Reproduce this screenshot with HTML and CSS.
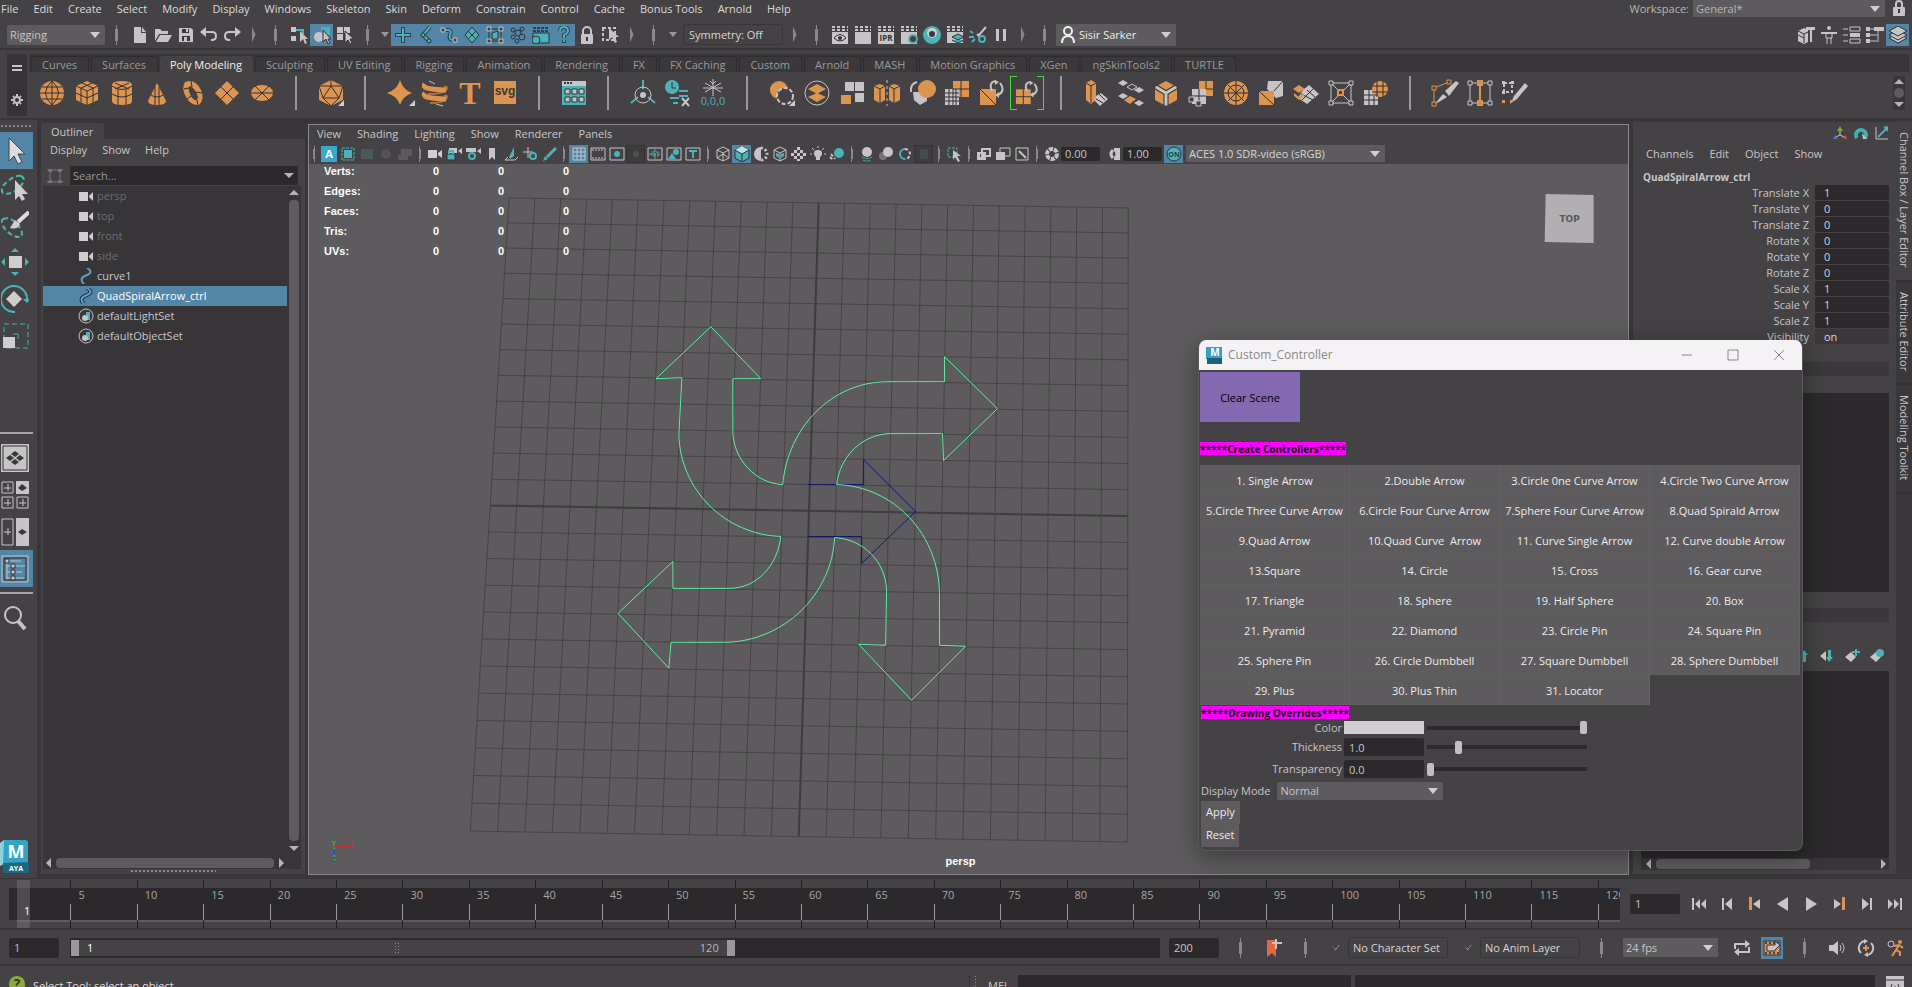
FILE: index.html
```html
<!DOCTYPE html>
<html lang="en">
<head>
    <meta charset="UTF-8">
    <meta name="viewport" content="width=device-width, initial-scale=1.0">
    <title>Custom_Controller</title>
    <link rel="stylesheet" href="styles.css">
</head>
<body>

<header class="menubar">
    <nav class="menu">
        <a href="#">File</a><a href="#">Edit</a><a href="#">Create</a><a href="#">Select</a><a href="#">Modify</a><a href="#">Display</a><a href="#">Windows</a><a href="#">Skeleton</a><a href="#">Skin</a><a href="#">Deform</a><a href="#">Constrain</a><a href="#">Control</a><a href="#">Cache</a><a href="#">Bonus Tools</a><a href="#">Arnold</a><a href="#">Help</a>
    </nav>
    <div class="workspace">
        <label for="workspace">Workspace:</label>
        <div class="select"><select id="workspace"><option>General*</option></select></div>
        <svg class="lock" width="14" height="16" viewBox="0 0 14 16"><path d="M4 8V4a3 3 0 0 1 6 0v4" fill="none" stroke="#c6c4c6" stroke-width="2"/><rect class="g" x="1" y="7" width="12" height="9" rx="1"/><path class="d" d="M6 9h2v4H6z"/></svg>
    </div>
</header>

<!-- Status line -->
<div class="status-line">
    <div class="select menuset"><select aria-label="Menu set"><option>Rigging</option></select></div>
    <i class="sep"></i>
    <button class="tool" aria-label="New scene"><svg width="18" height="18" viewBox="0 0 18 18"><path class="g" d="M3 1h7v6h5v10H3z"/><path class="g" d="M11 1l4 5h-4z"/></svg></button>
    <button class="tool" aria-label="Open scene"><svg width="18" height="18" viewBox="0 0 18 18"><path class="g" d="M1 3h5l2 2h6v3H5l-4 7z"/><path class="g" d="M6 9h12l-4 7H2z"/></svg></button>
    <button class="tool" aria-label="Save scene"><svg width="18" height="18" viewBox="0 0 18 18"><path class="g" d="M2 2h12l2 2v12H2z"/><path class="d" d="M5 3h7v4H5zM5 10h8v5H5z"/><path class="g" d="M9 3h2v3H9zM7 11h3v4H7z"/></svg></button>
    <button class="tool" aria-label="Undo"><svg width="18" height="18" viewBox="0 0 18 18"><path class="ln2" d="M3 6h9q4 0 4 4t-4 4h-1"/><path class="g" d="M6 1v10L0 6z"/></svg></button>
    <button class="tool" aria-label="Redo"><svg width="18" height="18" viewBox="0 0 18 18"><path class="ln2" d="M15 6H6q-4 0-4 4t4 4h1"/><path class="g" d="M12 1v10l6-5z"/></svg></button>
    <i class="chev"></i><i class="sep"></i>
    <button class="tool" aria-label="Select by hierarchy"><svg width="18" height="18" viewBox="0 0 18 18"><path class="g" d="M1 1h5v5H1zM1 10h5v5H1z"/><path class="lt" d="M6 4h7v4"/><path class="g" d="M10 5v11l3-3 2 5 2-1-2-4h3z"/></svg></button>
    <button class="tool on" aria-label="Select by object"><svg width="18" height="18" viewBox="0 0 18 18"><path class="t" d="M8 1h9v8H8z"/><circle class="g" cx="6" cy="11" r="5"/><path class="g st" d="M10 4v12l3-3 2 5 2-1-2-4h3z"/></svg></button>
    <button class="tool" aria-label="Select by component"><svg width="18" height="18" viewBox="0 0 18 18"><path class="g" d="M1 1h6v6H1zM8 1h6v6H8zM1 8h6v6H1z"/><path class="g st" d="M9 5v12l3-3 2 4 2-1-2-4h4z"/></svg></button>
    <i class="sep"></i><i class="drop"></i>
    <button class="tool on" aria-label="Handles"><svg width="18" height="18" viewBox="0 0 18 18"><path class="ld3" d="M9 1v16M1 9h16"/><path class="lt" d="M9 2v14M2 9h14"/></svg></button>
    <button class="tool on" aria-label="Joints"><svg width="18" height="18" viewBox="0 0 18 18"><path class="ld3" d="M13 1L6 9l6 6"/><path class="lt" d="M13 1L6 9l6 6"/><circle class="t st" cx="6" cy="9" r="2"/><circle class="t st" cx="12" cy="15" r="2"/></svg></button>
    <button class="tool on" aria-label="Curves"><svg width="18" height="18" viewBox="0 0 18 18"><path class="ld3" d="M4 4h4q4 0 2 5t4 5"/><path class="lt" d="M4 4h4q4 0 2 5t4 5"/><path class="hb" d="M1 2h4v4H1zM13 12h4v4h-4z"/></svg></button>
    <button class="tool on" aria-label="Surfaces"><svg width="18" height="18" viewBox="0 0 18 18"><path class="t st" d="M9 1l7 8-7 8-7-8z"/><path class="ld" d="M5 5l8 8M13 5l-8 8"/></svg></button>
    <button class="tool on" aria-label="Deformations"><svg width="18" height="18" viewBox="0 0 18 18"><path class="ld" d="M3 3h12v12H3z"/><path class="t st" d="M6 7l6-2v8H6z"/><path class="hb" d="M1 1h4v4H1zM13 1h4v4h-4zM1 13h4v4H1zM13 13h4v4h-4z"/></svg></button>
    <button class="tool on" aria-label="Dynamics"><svg width="18" height="18" viewBox="0 0 18 18"><g class="ld"><circle cx="4" cy="4" r="2"/><circle cx="13" cy="3" r="2"/><circle cx="9" cy="7" r="3"/><circle cx="4" cy="11" r="2"/><circle cx="13" cy="11" r="3"/><circle cx="8" cy="15" r="2"/></g></svg></button>
    <button class="tool on" aria-label="Rendering"><svg width="18" height="18" viewBox="0 0 18 18"><path class="t st" d="M1 7h16v10H1z"/><path class="dash" d="M1 2h16M1 5h16"/><circle class="t st" cx="4" cy="14" r="4"/></svg></button>
    <button class="tool on" aria-label="Miscellaneous"><svg width="18" height="18" viewBox="0 0 18 18"><path class="ld3" d="M5 5q0-4 4-4t4 4q0 2-4 4v3M9 14v3"/><path class="lt" d="M5 5q0-4 4-4t4 4q0 2-4 4v3M9 14v2"/></svg></button>
    <button class="tool" aria-label="Lock selection"><svg width="18" height="18" viewBox="0 0 18 18"><path class="ln2" d="M5 8V5a4 4 0 0 1 8 0v3"/><rect class="g" x="3" y="8" width="12" height="10" rx="1"/><path class="d" d="M8 11h2v4H8z"/></svg></button>
    <button class="tool" aria-label="Highlight selection"><svg width="18" height="18" viewBox="0 0 18 18"><path class="dashg" d="M2 2h12v12H2z"/><path class="g" d="M8 2v12l3-3 3 6 2-1-2-5h4z"/></svg></button>
    <i class="chev"></i><i class="sep"></i><i class="drop wide"></i>
    <button class="boxed symmetry">Symmetry: Off</button>
    <i class="chev"></i><i class="sep"></i>
    <button class="tool" aria-label="Render view"><svg width="18" height="18" viewBox="0 0 18 18"><path class="dashg" d="M1 1h16M1 4h16"/><path class="g" d="M1 6h16v12H1z"/><path class="ld" d="M3 12q6-7 12 0q-6 6-12 0"/><circle class="d" cx="9" cy="12" r="2"/></svg></button>
    <button class="tool" aria-label="Render frame"><svg width="18" height="18" viewBox="0 0 18 18"><path class="dashg" d="M1 1h16M1 4h16"/><path class="g" d="M1 6h16v12H1z"/></svg></button>
    <button class="tool" aria-label="IPR render"><svg width="18" height="18" viewBox="0 0 18 18"><path class="dashg" d="M1 1h16M1 4h16"/><path class="g" d="M1 6h16v12H1z"/><text class="tiny" x="9" y="15" text-anchor="middle">IPR</text></svg></button>
    <button class="tool" aria-label="Render settings"><svg width="18" height="18" viewBox="0 0 18 18"><path class="dashg" d="M1 1h16M1 4h16"/><path class="g" d="M1 6h16v12H1z"/><circle cx="13" cy="13" r="4" class="gear"/></svg></button>
    <button class="tool" aria-label="Hypershade"><svg width="18" height="18" viewBox="0 0 18 18"><circle class="t" cx="9" cy="9" r="9"/><circle class="w" cx="9" cy="7" r="5"/><circle class="d" cx="9" cy="8" r="3"/></svg></button>
    <button class="tool" aria-label="Render setup"><svg width="18" height="18" viewBox="0 0 18 18"><path class="dashg" d="M1 1h16M1 4h16"/><path class="g" d="M1 6h16v11H1z"/><path class="t st" d="M12 8l6 3-6 3-6-3zM6 14l6 3 6-3"/></svg></button>
    <button class="tool" aria-label="Light editor"><svg width="18" height="18" viewBox="0 0 18 18"><path class="ln2" d="M17 1l-7 8M8 8l3 3"/><path class="lt" d="M1 5l3 2M0 11h5M3 16l3-3"/><circle cx="13" cy="13" r="3" class="gear"/></svg></button>
    <button class="tool" aria-label="Pause"><svg width="18" height="18" viewBox="0 0 18 18"><path class="g" d="M4 3h3v12H4zM11 3h3v12h-3z"/></svg></button>
    <i class="chev"></i><i class="sep"></i>
    <div class="select account">
        <svg width="16" height="18" viewBox="0 0 16 18"><circle cx="8" cy="5" r="4" fill="none" stroke="#eee" stroke-width="2"/><path d="M2 17q0-7 6-7t6 7" fill="none" stroke="#eee" stroke-width="2"/></svg>
        <select aria-label="Account"><option>Sisir Sarker</option></select>
    </div>
    <div class="sidebar-toggles">
        <button class="tool" aria-label="Modeling toolkit"><svg width="18" height="18" viewBox="0 0 18 18"><path class="g" d="M1 5l6-3 4 2v12l-4 2-6-3z"/><path class="ld" d="M1 9l6 3M7 8v9M1 5l6 3 4-2"/><path class="g" d="M9 1h9v3h-3v12h-2V4H9z"/></svg></button>
        <button class="tool" aria-label="Human IK"><svg width="18" height="18" viewBox="0 0 18 18"><circle class="g" cx="9" cy="2" r="2"/><path class="ln2" d="M1 7h16"/><path class="ln" d="M6 6v6h6V6M7 12v6M11 12v6"/></svg></button>
        <button class="tool" aria-label="Attribute editor"><svg width="18" height="18" viewBox="0 0 18 18"><path class="ln" d="M0 3h5M7 1h10v4H7zM0 9h5M0 15h5M7 13h10v4H7z"/><path class="g" d="M7 7h10v4H7z"/></svg></button>
        <button class="tool" aria-label="Tool settings"><svg width="18" height="18" viewBox="0 0 18 18"><path class="ln" d="M3 3h5M3 9h8M3 15h8M12 4v12"/><path class="g" d="M0 1h4v4H0zM0 7h4v4H0zM0 13h4v4H0zM8 1h10v4H8z"/></svg></button>
        <button class="tool on" aria-label="Channel box"><svg width="18" height="18" viewBox="0 0 18 18"><path class="g st" d="M9 7l9 5-9 5-9-5z"/><path class="g st" d="M9 4l9 5-9 5-9-5z"/><path class="g st" d="M9 0l9 5-9 5-9-5z"/></svg></button>
    </div>
</div>

<!-- Shelf -->
<div class="shelf">
    <div class="shelf-side">
        <svg width="12" height="8" viewBox="0 0 12 8"><path class="g" d="M1 1h10v2H1zM1 5h10v2H1z"/></svg>
        <svg width="12" height="12" viewBox="0 0 12 12"><circle cx="6" cy="6" r="3" fill="none" stroke="#c6c4c6" stroke-width="2"/><path d="M6 0v2M6 10v2M0 6h2M10 6h2M2 2l1 1M9 9l1 1M10 2L9 3M2 10l1-1" stroke="#c6c4c6" stroke-width="2"/></svg>
    </div>
    <div class="shelf-main">
        <div class="shelf-tabs">
            <button>Curves</button><button>Surfaces</button><button class="active">Poly Modeling</button><button>Sculpting</button><button>UV Editing</button><button>Rigging</button><button>Animation</button><button>Rendering</button><button>FX</button><button>FX Caching</button><button>Custom</button><button>Arnold</button><button>MASH</button><button>Motion Graphics</button><button>XGen</button><button>ngSkinTools2</button><button>TURTLE</button>
        </div>
        <div class="shelf-icons">
            <button aria-label="Sphere"><svg viewBox="0 0 26 26"><circle class="o" cx="13" cy="13" r="12"/><path class="ld" d="M1 13h24M3 7h20M3 19h20M13 1v24M13 1q-13 12 0 24M13 1q13 12 0 24"/></svg></button>
            <button aria-label="Cube"><svg viewBox="0 0 26 26"><path class="o" d="M13 1l11 5v14l-11 5-11-5V6z"/><path class="ld" d="M2 6l11 5 11-5M13 11v14M8 3l11 5v14M18 3L7 8v14M2 13l11 5 11-5"/></svg></button>
            <button aria-label="Cylinder"><svg viewBox="0 0 26 26"><path class="o" d="M3 5q0-4 10-4t10 4v16q0 4-10 4T3 21z"/><path class="ld" d="M3 6q10 7 20 0M3 14q10 6 20 0M9 9v16M17 9v16M6 3l14 6M20 3L6 9"/></svg></button>
            <button aria-label="Cone"><svg viewBox="0 0 26 26"><path class="o" d="M13 3l9 18q0 4-9 4t-9-4z"/><path class="ld" d="M7 15q6 4 12 0M11 7v18M15 7v18"/></svg></button>
            <button aria-label="Torus"><svg viewBox="0 0 26 26"><path class="o" fill-rule="evenodd" d="M10 1q8 0 12 9t-2 15q-8 1-13-8T6 2zm1 5q-3 1 0 8t7 6q2-3-1-8t-6-6z"/><path class="ld" d="M5 9l5-1M12 1l1 6M16 12l7 1M8 19l4-3M18 20l1 5"/></svg></button>
            <button aria-label="Plane"><svg viewBox="0 0 26 26"><path class="o" d="M13 1l12 12-12 12L1 13z"/><path class="ld" d="M7 7l12 12M19 7L7 19"/></svg></button>
            <button aria-label="Disc"><svg viewBox="0 0 26 26"><ellipse class="o" cx="13" cy="13" rx="11" ry="8"/><path class="ld" d="M2 13h22M6 6l14 14M20 6L6 20"/></svg></button>
            <i class="bar"></i>
            <button aria-label="Platonic solid"><svg viewBox="0 0 26 26"><path class="o" d="M13 0l12 6v14l-12 6-12-6V6z"/><path class="ld" d="M13 0v6L5 18h16L13 6M1 6l12 0 12 0M5 18l-4-12M21 18l4-12M5 18l8 8 8-8"/><path class="w" d="M26 20v6h-6z"/></svg></button>
            <i class="bar"></i>
            <button aria-label="Super shape"><svg viewBox="0 0 26 26"><path class="o" d="M13 0q3 10 12 13-9 3-12 12Q10 16 0 13 10 10 13 0z"/><path class="w" d="M28 20v6h-6z"/></svg></button>
            <button aria-label="Helix"><svg viewBox="0 0 26 26"><path d="M22 7q5-1 2 3t-18 4M22 16q5-1 2 3t-16 4" fill="none" stroke="#b87437" stroke-width="2"/><path d="M3 4q-3 4 7 5t14 1M3 13q-3 4 7 5t14 1" fill="none" stroke="#dd9450" stroke-width="5"/><path class="ln" d="M7 1l6 3M14 24l7 2"/></svg></button>
            <button aria-label="Type"><svg viewBox="0 0 26 26"><text class="type-t" x="13" y="24" text-anchor="middle">T</text></svg></button>
            <button aria-label="SVG"><svg viewBox="0 0 26 26"><path class="o" d="M2 1h22v23H2z"/><text class="svg-t" x="13" y="15" text-anchor="middle">svg</text></svg></button>
            <i class="bar"></i>
            <button aria-label="Content browser"><svg viewBox="0 0 26 26"><path class="g" d="M1 1h24v5H1z"/><path class="d" d="M3 2h2v2H3zM6 2h2v2H6zM9 2h2v2H9z"/><path class="t" d="M1 6h24v19H1z"/><path d="M4 9h5v5H4zM11 9h5v5h-5zM18 9h5v5h-5zM4 17h5v5H4zM11 17h5v5h-5zM18 17h5v5h-5z" fill="#c6c4c6" stroke="#333"/></svg></button>
            <i class="bar"></i>
            <button aria-label="Center pivot"><svg viewBox="0 0 26 26"><path class="lt2" d="M13 0v9M8 17l-7 6M18 17l7 6"/><circle class="ln" cx="13" cy="15" r="8"/><circle class="g" cx="13" cy="15" r="3"/></svg></button>
            <button aria-label="Delete history"><svg viewBox="0 0 26 26"><circle class="t" cx="7" cy="7" r="7"/><path class="ld" d="M7 2v6h4"/><path class="lt2" d="M14 11h9M5 18h9M14 16h9M8 23h5"/><path class="ln2" d="M17 18l7 8M24 18l-7 8"/></svg></button>
            <button aria-label="Freeze transformations"><svg viewBox="0 0 26 26"><path class="ln" d="M13 -1v17M5 3l16 9M21 3L5 12M3 8h20M10 1l3 3 3-3"/><text class="zeros" x="13" y="25" text-anchor="middle">0,0,0</text></svg></button>
            <i class="bar"></i>
            <button aria-label="Booleans"><svg viewBox="0 0 26 26"><circle class="o" cx="10" cy="10" r="9"/><circle cx="16" cy="16" r="8" fill="#444244" stroke="#c6c4c6" stroke-width="2" stroke-dasharray="4 2"/><path class="w" d="M26 20v6h-6z"/></svg></button>
            <button aria-label="Combine"><svg viewBox="0 0 26 26"><circle class="ln" cx="13" cy="13" r="12"/><path class="o" d="M13 4l9 5-9 5-9-5zM13 13l9 4-9 5-9-5z"/></svg></button>
            <button aria-label="Separate"><svg viewBox="0 0 26 26"><path class="g" d="M6 2h9v9H6zM16 2h9v9h-9zM16 13h9v9h-9z"/><path class="o" d="M2 15h10v9H2z"/></svg></button>
            <button aria-label="Mirror"><svg viewBox="0 0 26 26"><path class="o" d="M0 6l6-2 5 2v14l-5 3-6-3zM15 6l5-2 6 2v14l-6 3-5-3z"/><path class="ld" d="M0 6l6 3 5-3M6 9v14M15 6l5 3 6-3M20 9v14"/><path d="M13 0v26" stroke="#c6c4c6" stroke-dasharray="3 3"/></svg></button>
            <button aria-label="Smooth"><svg viewBox="0 0 26 26"><path class="g" d="M4 12h14v9l-7 4-6-5z"/><circle class="o" cx="18" cy="9" r="9"/><path class="ln2" d="M2 12q-1-8 6-10"/></svg></button>
            <button aria-label="Reduce"><svg viewBox="0 0 26 26"><path class="o" d="M9 1h16v16H9z"/><path class="g" d="M1 9h14v16H1z"/><path class="ld" d="M17 1v16M9 9h16M1 13h14M1 17h14M1 21h14M5 9v16M9 9v16M12 9v16"/></svg></button>
            <button aria-label="Triangulate"><svg viewBox="0 0 26 26"><path class="o" d="M1 9h16v16H1z"/><path class="ld" d="M1 9l16 16"/><path class="ln2" d="M13 11q-4-9 4-10M21 3q6 8-2 12"/><path class="g" d="M16 0l4 2-4 3zM20 12v6l-4-3z"/></svg></button>
            <button aria-label="Quadrangulate"><svg viewBox="0 0 26 26" class="framed"><path class="o" d="M1 9h16v16H1z"/><path class="ld" d="M9 9v16M1 17h16"/><path class="ln2" d="M13 11q-4-9 4-10M21 3q6 8-2 12"/><path class="g" d="M16 0l4 2-4 3zM20 12v6l-4-3z"/></svg></button>
            <i class="bar"></i>
            <button aria-label="Extrude"><svg viewBox="0 0 26 26"><path class="o" d="M3 3l5-3 5 3v17l-5 4-5-4z"/><path class="ld" d="M3 3l5 3 5-3M8 6v17"/><path class="g" d="M13 16l5-3 7 6-8 7-5-5z"/><path class="ld" d="M13 19l7 4M16 14l6 6"/></svg></button>
            <button aria-label="Bridge"><svg viewBox="0 0 26 26"><path class="g" d="M0 3l5-3 5 3-5 3zM16 10l5-3 5 3-5 3zM0 16l5-3 5 3-5 3zM16 23l5-3 5 3-5 3z"/><path class="o" d="M6 20l6-4 6 3-6 5z"/><path class="ln" d="M9 7l5-3 5 3-5 3z"/></svg></button>
            <button aria-label="Bevel"><svg viewBox="0 0 26 26"><path class="o" d="M2 7l11-6 11 6v13l-11 6-11-6z"/><path d="M3 7l10 6 10-6M13 13v12" fill="none" stroke="#333133" stroke-width="5"/><path d="M3 7l10 6 10-6M13 13v12" fill="none" stroke="#c6c4c6" stroke-width="3"/></svg></button>
            <button aria-label="Merge"><svg viewBox="0 0 26 26"><path class="o" d="M11 1h14v15H11z"/><path class="g" d="M4 9h14v15H4z"/><path class="ld" d="M18 1v8h7M4 16h14M11 9v15"/><path class="hb" d="M1 17h5v5H1zM8 21h5v5H8z"/></svg></button>
            <button aria-label="Circularize"><svg viewBox="0 0 26 26"><circle class="o" cx="13" cy="13" r="12"/><circle class="ld" cx="13" cy="13" r="8"/><path class="ld" d="M1 13h24M13 1v24M5 5l16 16M21 5L5 21"/></svg></button>
            <button aria-label="Collapse"><svg viewBox="0 0 26 26"><path class="g" d="M10 1h15v15l-7 2-9-9z"/><path class="o" d="M1 11h15v14H1z"/><path class="ld" d="M1 11l15 14M16 11l9-10"/></svg></button>
            <button aria-label="Connect"><svg viewBox="0 0 26 26"><path class="g" d="M10 10l6-5 10 9-12 10-9-6z"/><path class="ld" d="M8 14l12 6M14 10l8 7M20 9l-11 11"/><path class="o" d="M0 9l6-4 6 4-6 4zM1 13l5 4 5-4v3l-5 4-5-4z"/></svg></button>
            <button aria-label="Target weld"><svg viewBox="0 0 26 26"><path class="ln" d="M3 3h20v20H3zM3 3l7 7M23 3l-7 7M3 23l7-7M23 23l-7-7"/><path class="hb" d="M1 1h4v4H1zM21 1h4v4h-4zM1 21h4v4H1zM21 21h4v4h-4z"/><path d="M10 10h5v5h-5z" fill="#444244" stroke="#dd9450" stroke-width="2"/></svg></button>
            <button aria-label="Wrap"><svg viewBox="0 0 26 26"><path class="g" d="M1 10h14v15H1z"/><circle class="o" cx="17" cy="9" r="8"/><path class="ld" d="M1 15h14M1 20h14M6 10v15M11 16v9M9 6h16M9 12h16M14 1v16M20 1v16"/></svg></button>
            <i class="bar"></i>
            <button aria-label="Multi-cut"><svg viewBox="0 0 26 26"><path d="M2 23V8l15-6" fill="none" stroke="#dd9450"/><path class="g" d="M2 25l9-11 4 3zM13 11L24 1l3 2-10 13z"/><path d="M0 6h4v4H0zM15 0h4v4h-4zM0 22h4v4H0z" fill="#444244" stroke="#dd9450"/></svg></button>
            <button aria-label="Offset edge loop"><svg viewBox="0 0 26 26"><path class="ln" d="M3 3h20M3 23h20M3 3v20M23 3v20"/><path class="lo" d="M13 3v20M11 1h4v4h-4zM11 21h4v4h-4z"/><path class="hb" d="M1 1h4v4H1zM21 1h4v4h-4zM1 21h4v4H1zM21 21h4v4h-4z"/></svg></button>
            <button aria-label="Quad draw"><svg viewBox="0 0 26 26"><path class="dashg" d="M2 3h8v9H2z"/><path class="g" d="M0 1h3v3H0zM9 1h3v3H9zM0 11h3v3H0z"/><path class="g" d="M9 23l3-7L23 3l3 3-11 13z"/><path class="o" d="M0 20h3v3H0zM8 20h4l-4 4z"/></svg></button>
            <div class="shelf-scroll"><i class="up"></i><i class="ball"></i><i class="down"></i></div>
        </div>
    </div>
</div>

<main class="workarea">
    <!-- Tool box -->
    <aside class="toolbox">
        <i class="grip"></i>
        <button class="on" aria-label="Select tool"><svg viewBox="0 0 28 28"><path d="M8 1v23l5-5 4 8 4-2-4-8h7z" fill="#dddbdd" stroke="#444" /></svg></button>
        <button aria-label="Lasso tool"><svg viewBox="0 0 28 28"><path class="tdash" d="M20 2q6 3-1 11-9 9-17 6-4-5 5-12 7-6 13-5"/><path class="w" d="M14 6v20l4-4 3 5 3-2-3-5h6z"/></svg></button>
        <button aria-label="Paint selection tool"><svg viewBox="0 0 28 28"><path class="tdash" d="M2 8q7-3 14 5t4 13q-8 1-15-7T2 8"/><path d="M28 1L17 11" stroke="#dddbdd" stroke-width="4"/><path class="w" d="M14 9l5 4q-2 6-10 4z"/></svg></button>
        <button aria-label="Move tool"><svg viewBox="0 0 28 28"><path class="w" d="M8 8h13v12H8z"/><path class="t" d="M14 0l4 4h-8zM14 28l4-4h-8zM0 14l4-4v8zM28 14l-4-4v8z"/></svg></button>
        <button aria-label="Rotate tool"><svg viewBox="0 0 28 28"><path class="lt2" d="M14 27A13 13 0 1 1 26 14"/><path class="t" d="M22 14h8l-4 4z"/><path class="w" d="M13 6l8 8-8 8-8-8z"/></svg></button>
        <button aria-label="Scale tool"><svg viewBox="0 0 28 28"><path d="M3 2h24v24H3z" fill="none" stroke="#4db5b0" stroke-dasharray="5 3"/><path class="w" d="M2 15h12v11H2z"/><path d="M12 12h5v5" fill="none" stroke="#4db5b0"/></svg></button>
        <hr class="far">
        <button aria-label="Single view"><svg viewBox="0 0 28 28"><path class="g" d="M0 0h28v28H0z"/><path class="ld" d="M2 2h24v24H2z"/><path class="d" d="M14 7l4 3-4 3-4-3zM14 15l4 3-4 3-4-3zM9 11l4 3-4 3-4-3zM19 11l4 3-4 3-4-3z"/></svg></button>
        <button aria-label="Four views"><svg viewBox="0 0 28 28"><path class="ln" d="M1 1h11v11H1zM1 16h11v11H1zM16 16h11v11H16zM3 7h7M7 3v7M3 22h7M7 18v7M18 22h7M22 18v7"/><path class="g" d="M15 0h13v13H15z"/><path class="d" d="M21 3l5 4-5 3-4-3z"/></svg></button>
        <button aria-label="Two panes"><svg viewBox="0 0 28 28"><path class="ln" d="M1 1h11v26H1zM3 14h7M7 10v7"/><path class="g" d="M15 0h13v28H15z"/><path class="d" d="M21 11l5 3-5 3-4-3z"/></svg></button>
        <button class="on" aria-label="Outliner"><svg viewBox="0 0 28 28"><path class="ln" d="M1 1h26v26H1z"/><path class="ld" d="M3 3h22v22H3z"/><path class="ln" d="M6 6v18M7 6h13M12 11h12M12 17h9M12 23h11M6 11h4M6 17h4M6 23h4"/><path class="g st" d="M4 4h4v4H4zM10 9h4v4h-4zM10 15h4v4h-4zM10 21h4v4h-4z"/></svg></button>
        <hr>
        <button aria-label="Search"><svg viewBox="0 0 28 28"><circle cx="12" cy="11" r="8" fill="none" stroke="#c6c4c6" stroke-width="2"/><path d="M17 17l7 8" stroke="#c6c4c6" stroke-width="4"/></svg></button>
        <svg class="maya" width="30" height="33" viewBox="0 0 30 33"><path d="M0 3l4-3v24l-4 2z" fill="#8fd0e0"/><path d="M4 0h22l2 2v22H3z" fill="#34a3c8"/><path d="M3 23l26-1v11H3z" fill="#1c6680"/><text x="16" y="18" text-anchor="middle" class="maya-m">M</text><text x="16" y="31" text-anchor="middle" class="maya-s">AYA</text></svg>
    </aside>

    <!-- Outliner -->
    <section class="outliner">
        <div class="panel-tab"><span>Outliner</span></div>
        <nav class="menu"><a href="#">Display</a><a href="#">Show</a><a href="#">Help</a></nav>
        <div class="search">
            <svg width="16" height="18" viewBox="0 0 16 18"><path d="M3 3h10v12H3z" fill="none" stroke="#777577"/><path d="M0 2h5v3H2zM11 2h5l-2 3h-3zM0 14l5-1v3H1zM11 13l5 1-1 2h-4z" fill="#777577"/></svg>
            <div class="search-box"><input type="text" placeholder="Search..." aria-label="Search outliner"><i class="down"></i></div>
        </div>
        <div class="tree-wrap">
            <ul class="tree">
                <li class="dim"><svg viewBox="0 0 16 16"><path class="w" d="M1 4h9v9H1zM15 4v9l-4-4V8z"/></svg>persp</li>
                <li class="dim"><svg viewBox="0 0 16 16"><path class="w" d="M1 4h9v9H1zM15 4v9l-4-4V8z"/></svg>top</li>
                <li class="dim"><svg viewBox="0 0 16 16"><path class="w" d="M1 4h9v9H1zM15 4v9l-4-4V8z"/></svg>front</li>
                <li class="dim"><svg viewBox="0 0 16 16"><path class="w" d="M1 4h9v9H1zM15 4v9l-4-4V8z"/></svg>side</li>
                <li><svg viewBox="0 0 16 16"><path d="M9 0q7 4 0 7-9 3-3 9" fill="none" stroke="#5b9fca" stroke-width="2"/></svg>curve1</li>
                <li class="selected"><svg viewBox="0 0 16 16"><path d="M9 0q7 4 0 7-9 3-3 9" fill="none" stroke="#23333f" stroke-width="4"/><path d="M9 0q7 4 0 7-9 3-3 9" fill="none" stroke="#5b9fca" stroke-width="2"/></svg>QuadSpiralArrow_ctrl</li>
                <li><svg viewBox="0 0 16 16"><circle class="ln" cx="8" cy="8" r="7"/><path class="t" d="M8 4h4v8H8z"/><circle class="g" cx="7" cy="10" r="3"/></svg>defaultLightSet</li>
                <li><svg viewBox="0 0 16 16"><circle class="ln" cx="8" cy="8" r="7"/><path class="t" d="M8 4h4v8H8z"/><circle class="g" cx="7" cy="10" r="3"/></svg>defaultObjectSet</li>
            </ul>
            <div class="vscroll"><i class="up"></i><b></b><i class="down"></i></div>
        </div>
        <div class="hscroll"><i class="left"></i><b></b><i class="right"></i></div>
        <div class="dots"></div>
    </section>

    <!-- Viewport -->
    <section class="viewport">
        <nav class="menu"><a href="#">View</a><a href="#">Shading</a><a href="#">Lighting</a><a href="#">Show</a><a href="#">Renderer</a><a href="#">Panels</a></nav>
        <div class="panel-bar">
            <i class="sep"></i>
            <button aria-label="Arnold"><svg viewBox="0 0 16 16"><path d="M0 0h16v16H0z" fill="#3aa7cc"/><text class="a-t" x="8" y="12" text-anchor="middle">A</text></svg></button>
            <button aria-label="Region"><svg viewBox="0 0 16 16"><path class="t" d="M4 4h8v8H4z"/><path class="tdash2" d="M2 2h12v12H2z"/></svg></button>
            <button class="off" aria-label="Snapshot"><svg viewBox="0 0 16 16"><path d="M2 3h12v10H2z" fill="#4a595b"/></svg></button>
            <button class="off" aria-label="Channels"><svg viewBox="0 0 16 16"><circle cx="8" cy="8" r="5" fill="#555355"/></svg></button>
            <button class="off" aria-label="Layers"><svg viewBox="0 0 16 16"><path d="M4 3h11v7H4zM1 9h10v5H1z" fill="#5c5a5c"/></svg></button>
            <i class="sep"></i>
            <button aria-label="Select camera"><svg viewBox="0 0 16 16"><path class="w" d="M1 4h9v8H1zM15 4v8l-4-3V7z"/></svg></button>
            <button aria-label="Lock camera"><svg viewBox="0 0 16 16"><path class="g" d="M3 2h8v5H3zM16 2v6l-4-3z"/><path class="t st" d="M1 8h8v6H1z"/><path class="lt" d="M3 8V5h4v3"/></svg></button>
            <button aria-label="Camera attributes"><svg viewBox="0 0 16 16"><path class="g" d="M1 2h10v4H1zM16 2v6l-4-3z"/><circle cx="7" cy="10" r="3" class="gear"/></svg></button>
            <button aria-label="Bookmarks"><svg viewBox="0 0 16 16"><path class="g" d="M5 2h6v12l-3-3-3 3z"/></svg></button>
            <button aria-label="Image plane"><svg viewBox="0 0 16 16"><path class="t" d="M6 11l5-10v9l-4 3z"/><path class="ln" d="M5 11l-3 3h10l3-3"/></svg></button>
            <button aria-label="Pan and zoom"><svg viewBox="0 0 16 16"><path class="ln" d="M6 1v11M1 6h10"/><circle cx="11" cy="10" r="3" class="gear"/></svg></button>
            <button aria-label="Blue pencil"><svg viewBox="0 0 16 16"><path d="M15 2L6 11" stroke="#4db5b0" stroke-width="3"/><path class="t" d="M2 15l2-5 3 3z"/></svg></button>
            <i class="sep"></i>
            <button class="on" aria-label="Grid"><svg viewBox="0 0 16 16"><path class="ln" d="M2 2h12v12H2zM6 2v12M10 2v12M2 6h12M2 10h12"/></svg></button>
            <button aria-label="Film gate"><svg viewBox="0 0 16 16"><path class="ln" d="M1 2h14v12H1z"/><path d="M2 4h12M2 12h12" stroke="#c6c4c6" stroke-dasharray="2 1"/></svg></button>
            <button aria-label="Resolution gate"><svg viewBox="0 0 16 16"><path class="ln" d="M1 2h14v12H1z"/><circle class="t" cx="8" cy="8" r="3"/></svg></button>
            <button class="off sunk" aria-label="Gate mask"><svg viewBox="0 0 16 16"><circle cx="8" cy="8" r="3" fill="#515051"/></svg></button>
            <button aria-label="Field chart"><svg viewBox="0 0 16 16"><path class="ln" d="M1 2h14v12H1z"/><path class="tdash2" d="M2 8h12M8 3v10M5 6h6v4H5z"/></svg></button>
            <button aria-label="Safe action"><svg viewBox="0 0 16 16"><path class="ln" d="M1 2h14v12H1z"/><circle class="t" cx="10" cy="6" r="3"/><path class="t" d="M6 7l4 6H2z"/></svg></button>
            <button aria-label="Safe title"><svg viewBox="0 0 16 16"><path class="ln" d="M1 2h14v12H1z"/><path class="lt2" d="M4 5h8M8 5v7"/></svg></button>
            <i class="sep"></i>
            <button aria-label="Wireframe"><svg viewBox="0 0 16 16"><path class="ln" d="M8 1l6 3v8l-6 3-6-3V4zM2 4l6 3 6-3M8 7v8M2 12l6-4 6 4"/></svg></button>
            <button class="on" aria-label="Smooth shade"><svg viewBox="0 0 16 16"><path class="t st" d="M8 0l7 4v8l-7 4-7-4V4z"/><path d="M8 0l7 4-7 4-7-4z" fill="#b5e6e6"/><path class="ld" d="M1 4l7 4 7-4M8 8v8"/></svg></button>
            <button aria-label="Default material"><svg viewBox="0 0 16 16"><path class="g" d="M8 1a7 7 0 0 0 0 14z"/><path d="M8 2a6 6 0 0 1 0 12" fill="none" stroke="#c6c4c6" stroke-width="3" stroke-dasharray="2 2"/></svg></button>
            <button aria-label="Wireframe on shaded"><svg viewBox="0 0 16 16"><path class="ln" d="M8 1l6 3v8l-6 3-6-3V4zM2 4l6 3 6-3M8 7v8"/><path class="t" d="M4 7l3 1v4l-3-2zM12 7L9 8v4l3-2z"/></svg></button>
            <button aria-label="Textured"><svg viewBox="0 0 16 16"><path class="g" d="M6 1h3v3H6zM3 4h3v3H3zM9 4h3v3H9zM6 7h3v3H6zM12 7h3v3h-3zM0 7h3v3H0zM3 10h3v3H3zM9 10h3v3H9zM6 13h3v2H6z"/></svg></button>
            <button aria-label="Lights"><svg viewBox="0 0 16 16"><path class="g" d="M8 4q4 0 4 3t-2 4v3H6v-3q-2-1-2-4t4-3z"/><path class="ln" d="M8 0v2M2 2l2 2M14 2l-2 2M0 8h2M14 8h2"/></svg></button>
            <button aria-label="Shadows"><svg viewBox="0 0 16 16"><circle class="t" cx="10" cy="7" r="5"/><path class="dashg" d="M2 8l4 5M1 11l3 3"/></svg></button>
            <i class="sep"></i>
            <button aria-label="Ambient occlusion"><svg viewBox="0 0 16 16"><circle class="g" cx="8" cy="6" r="5"/><path class="tdash2" d="M3 11q5 3 10 0M4 14q4 2 8 0"/></svg></button>
            <button aria-label="Motion blur"><svg viewBox="0 0 16 16"><circle cx="5" cy="10" r="4" fill="#777577"/><circle class="g" cx="10" cy="6" r="5"/></svg></button>
            <button aria-label="Anti-aliasing"><svg viewBox="0 0 16 16"><path d="M8 3a5 5 0 0 0 0 10" class="lt2"/><path d="M8 3a5 5 0 0 1 0 10" fill="none" stroke="#c6c4c6" stroke-width="2" stroke-dasharray="3 2"/></svg></button>
            <button class="off sunk" aria-label="Depth of field"><svg viewBox="0 0 16 16"><path d="M4 3h8v10H4z" fill="#434b4d"/></svg></button>
            <i class="sep"></i>
            <button aria-label="Isolate select"><svg viewBox="0 0 16 16"><path class="tdash2" d="M2 2h9v9H2z"/><path class="g" d="M7 4v10l2-3 3 5 2-1-3-5h4z"/></svg></button>
            <i class="sep"></i>
            <button aria-label="X-ray"><svg viewBox="0 0 16 16"><path class="g" fill-rule="evenodd" d="M5 2h10v9H5zm2 2v5h6V4z"/><path class="g" fill-rule="evenodd" d="M1 6h9v8H1zm3 2v3h3V8z"/></svg></button>
            <button aria-label="X-ray active"><svg viewBox="0 0 16 16"><path class="ln" d="M5 2h10v8H5z"/><path class="g" d="M1 6h9v8H1z"/></svg></button>
            <button aria-label="X-ray joints"><svg viewBox="0 0 16 16"><path class="ln" d="M2 2h12v12H2z"/><path class="ln2" d="M5 5l7 7"/></svg></button>
            <i class="sep"></i>
            <button aria-label="Reset exposure"><svg viewBox="0 0 16 16"><circle cx="8" cy="8" r="5" fill="none" stroke="#c6c4c6" stroke-width="4" stroke-dasharray="4 1"/></svg></button>
            <input class="num" type="text" value="0.00" aria-label="Exposure">
            <button class="gap" aria-label="Reset gamma"><svg viewBox="0 0 16 16"><path class="g" d="M8 2h6v12H8v-3q3-3 0-6z"/><path d="M7 4q-4 4 0 8" fill="none" stroke="#c6c4c6" stroke-width="3"/></svg></button>
            <input class="num" type="text" value="1.00" aria-label="Gamma">
            <button class="on" aria-label="Color management"><svg viewBox="0 0 16 16"><circle class="t st" cx="8" cy="8" r="7"/><text class="on-t" x="8" y="11" text-anchor="middle">ON</text></svg></button>
            <div class="select view-transform"><select aria-label="View transform"><option>ACES 1.0 SDR-video (sRGB)</option></select></div>
        </div>
        <div class="canvas">
            <svg class="scene" viewBox="309 164 1320 711">
                <g id="grid" class="grid"></g>
                <path class="curve-navy" d="M808 485H864V460L916 512 862 564V537H808"/>
                <path class="curve-green" d="M711 327L656 379 682 378 679 435C680 490 725 535 781 537C778 565 758 589 729 589L673 589 673 562 618 614 669 669 671 643 727 643C785 641 832 595 835 538C864 540 886 562 887 591L886 646 859 645 912 701 966 647 940 646 940 594C939 535 895 487 837 485C840 457 863 434 891 434L943 434 944 461 998 409 945 357 945 382 888 382C832 382 788 428 783 485C756 484 734 460 733 433L733 379 761 379Z"/>
                <path d="M1547 194l48 1v48l-49-1z" fill="#b1afb1"/>
                <text class="cube" x="1571" y="222" text-anchor="middle">TOP</text>
                <path d="M334 848v14" stroke="#30c030" stroke-width="2"/><path d="M334 848h16" stroke="#c03030" stroke-width="2"/><path d="M334 850v6" stroke="#3040e0" stroke-width="2"/>
                <text class="axis" x="331" y="847" fill="#30c030">Y</text><text class="axis" x="348" y="848" fill="#c03030">X</text><text class="axis" x="331" y="863" fill="#3040e0">Z</text>
                <text class="cam" x="961" y="866" text-anchor="middle">persp</text>
            </svg>
            <table class="hud">
                <tr><th>Verts:</th><td>0</td><td>0</td><td>0</td></tr>
                <tr><th>Edges:</th><td>0</td><td>0</td><td>0</td></tr>
                <tr><th>Faces:</th><td>0</td><td>0</td><td>0</td></tr>
                <tr><th>Tris:</th><td>0</td><td>0</td><td>0</td></tr>
                <tr><th>UVs:</th><td>0</td><td>0</td><td>0</td></tr>
            </table>
        </div>
    </section>

    <!-- Channel box -->
    <section class="channels">
        <div class="channel-icons">
            <svg viewBox="0 0 14 14"><path d="M7 0l3 5H4z" fill="#7f9f3f"/><path class="ln" d="M7 5v4M7 9l-4 2M7 9l4 2"/><path d="M0 13l2-4 3 4z" fill="#4a70d0"/><path d="M14 13l-1-4-4 3z" fill="#d04a4a"/></svg>
            <svg viewBox="0 0 14 14"><path d="M3 12a5 5 0 1 1 8 0" fill="none" stroke="#3db0b0" stroke-width="4"/><path class="g" d="M8 7l5 6H9z"/></svg>
            <svg viewBox="0 0 14 14"><path class="ln" d="M1 1v12h12"/><path class="lt2" d="M3 11l8-8"/><path class="t" d="M13 0v6L8 1z"/></svg>
        </div>
        <nav class="menu"><a href="#">Channels</a><a href="#">Edit</a><a href="#">Object</a><a href="#">Show</a></nav>
        <h2>QuadSpiralArrow_ctrl</h2>
        <div class="attrs">
            <label for="tx">Translate X</label><input id="tx" value="1">
            <label for="ty">Translate Y</label><input id="ty" value="0">
            <label for="tz">Translate Z</label><input id="tz" value="0">
            <label for="rx">Rotate X</label><input id="rx" value="0">
            <label for="ry">Rotate Y</label><input id="ry" value="0">
            <label for="rz">Rotate Z</label><input id="rz" value="0">
            <label for="sx">Scale X</label><input id="sx" value="1">
            <label for="sy">Scale Y</label><input id="sy" value="1">
            <label for="sz">Scale Z</label><input id="sz" value="1">
            <label for="vis">Visibility</label><input id="vis" class="soft" value="on">
        </div>
        <div class="strip"></div>
        <div class="attr-list"></div>
        <div class="strip dark"></div>
        <div class="layer-head">
            <svg viewBox="0 0 16 16"><path class="g" d="M1 8l6-5v10z"/><path class="t" d="M9 14V7H7l3-5 4 5h-2v7z"/></svg>
            <svg viewBox="0 0 16 16"><path class="g" d="M1 8l6-5v10z"/><path class="t" d="M9 2v7H7l3 5 4-5h-2V2z"/></svg>
            <svg viewBox="0 0 16 16"><path class="g" d="M1 9l6-5 5 5-5 5z"/><path class="lt2" d="M12 1v7M8 4h8"/></svg>
            <svg viewBox="0 0 16 16"><path class="g" d="M1 9l6-5 5 5-5 5z"/><circle class="t" cx="11" cy="5" r="4"/></svg>
        </div>
        <div class="layer-list"></div>
        <div class="hscroll short"><i class="left"></i><b></b><i class="right"></i></div>
    </section>
    <nav class="side-tabs">
        <a href="#">Channel Box / Layer Editor</a>
        <a href="#" class="back">Attribute Editor</a>
        <a href="#" class="back">Modeling Toolkit</a>
    </nav>
</main>

<!-- Time slider -->
<div class="time-row">
    <div class="timeline">
        <div class="ticks" id="ticks"></div>
        <div class="current">1</div>
    </div>
    <input class="frame" type="text" value="1" aria-label="Current frame">
    <div class="playback">
        <button aria-label="Go to start"><svg viewBox="0 0 18 18"><path class="g" d="M2 3h2v12H2zM10 4v10L5 9zM16 4v10l-5-5z"/></svg></button>
        <button aria-label="Step back"><svg viewBox="0 0 18 18"><path class="g" d="M4 3h2v12H4zM14 3v12L7 9z"/></svg></button>
        <button aria-label="Previous key"><svg viewBox="0 0 18 18"><path class="o" d="M3 2h3v13H3z"/><path class="g" d="M14 4v10L7 9z"/></svg></button>
        <button aria-label="Play backwards"><svg viewBox="0 0 18 18"><path class="g" d="M14 2v14L3 9z"/></svg></button>
        <button aria-label="Play forwards"><svg viewBox="0 0 18 18"><path class="g" d="M4 2v14l11-7z"/></svg></button>
        <button aria-label="Next key"><svg viewBox="0 0 18 18"><path class="o" d="M12 2h3v13h-3z"/><path class="g" d="M4 4v10l7-5z"/></svg></button>
        <button aria-label="Step forward"><svg viewBox="0 0 18 18"><path class="g" d="M12 3h2v12h-2zM4 3v12l7-6z"/></svg></button>
        <button aria-label="Go to end"><svg viewBox="0 0 18 18"><path class="g" d="M14 3h2v12h-2zM2 4v10l5-5zM8 4v10l5-5z"/></svg></button>
    </div>
</div>

<!-- Range slider -->
<div class="range-row">
    <input class="frame" type="text" value="1" aria-label="Animation start">
    <div class="range"><div class="range-bar"><i></i><span>1</span><em></em><span class="dimmer">120</span><i></i></div></div>
    <input class="frame" type="text" value="200" aria-label="Animation end">
    <i class="sep"></i>
    <button class="tool" aria-label="Bookmark"><svg width="18" height="20" viewBox="0 0 18 20"><path d="M3 2h9v17l-4-4-5 4z" fill="#e06a40"/><path class="ln2" d="M12 1v10M8 5h10"/></svg></button>
    <i class="sep"></i>
    <i class="outline-drop"></i>
    <button class="boxed">No Character Set</button>
    <i class="outline-drop"></i>
    <button class="boxed">No Anim Layer</button>
    <i class="sep"></i>
    <div class="select fps"><select aria-label="Playback speed"><option>24 fps</option></select></div>
    <button class="tool" aria-label="Loop"><svg width="18" height="18" viewBox="0 0 18 18"><path class="ln2" d="M2 10V5h11M16 8v5H5"/><path class="g" d="M12 1l5 4-5 4zM6 9v8l-5-4z"/></svg></button>
    <button class="tool on" aria-label="Cached playback"><svg width="18" height="18" viewBox="0 0 18 18"><path class="o st" d="M1 2h16v14H1z"/><path d="M2 4h14M2 14h14" stroke="#444" stroke-width="2" stroke-dasharray="2 2"/><path class="g st" d="M4 6h8V2l5 4-5 5v1H4z"/></svg></button>
    <i class="sep"></i>
    <div class="prefs">
        <button class="tool" aria-label="Sound"><svg width="18" height="18" viewBox="0 0 18 18"><path class="g" d="M1 6h4l5-4v14l-5-4H1z"/><path class="ln" d="M12 6q2 3 0 6M14 4q4 5 0 10"/></svg></button>
        <button class="tool" aria-label="Auto key"><svg width="18" height="18" viewBox="0 0 18 18"><path class="ln2" d="M4 14A7 7 0 0 1 8 2M14 4a7 7 0 0 1-4 12"/><path class="g" d="M7 0l4 2-4 3zM11 18l-4-2 4-3z"/><path class="lo" d="M9 6v6M6 9h6"/></svg></button>
        <button class="tool" aria-label="Preferences"><svg width="18" height="18" viewBox="0 0 18 18"><circle class="ln" cx="5" cy="5" r="3"/><circle class="o" cx="14" cy="3" r="2"/><path class="lo" d="M13 6l-3 5 4 2v4M10 11l-4 6M8 7l5-1 4 3"/></svg></button>
    </div>
</div>

<footer class="help-line">
    <svg width="18" height="18" viewBox="0 0 18 18"><circle cx="9" cy="9" r="8" fill="#8dab3c"/><text x="9" y="14" text-anchor="middle" class="help-q">?</text></svg>
    <span class="help-text">Select Tool: select an object</span>
    <label for="mel">MEL</label>
    <input id="mel" type="text"><input class="result" type="text" aria-label="Result">
    <svg width="18" height="18" viewBox="0 0 18 18"><path class="g" d="M0 1h18v17H0z"/><path class="ld" d="M0 5h18M6 9q-3 4 0 8M12 9q3 4 0 8M9 11v4"/></svg>
</footer>

<!-- Custom_Controller window -->
<div class="window" role="dialog" aria-label="Custom_Controller">
    <div class="titlebar">
        <svg width="16" height="18" viewBox="0 0 16 18"><path d="M0 1h16v12H0z" fill="#35a2c5"/><path d="M1 12h15v6H1z" fill="#1b5f78"/><text x="9" y="10" text-anchor="middle" class="logo-m">M</text></svg>
        <span>Custom_Controller</span>
        <button aria-label="Minimize"><svg viewBox="0 0 12 12"><path d="M1 6h10"/></svg></button>
        <button aria-label="Maximize"><svg viewBox="0 0 12 12"><path d="M1 1h10v10H1z"/></svg></button>
        <button aria-label="Close"><svg viewBox="0 0 12 12"><path d="M1 1l10 10M11 1L1 11"/></svg></button>
    </div>
    <div class="window-body">
        <button class="clear">Clear Scene</button>
        <h3>*****Create Controllers*****</h3>
        <div class="shapes">
            <button>1. Single Arrow</button><button>2.Double Arrow</button><button>3.Circle 0ne Curve Arrow</button><button>4.Circle Two Curve Arrow</button>
            <button>5.Circle Three Curve Arrow</button><button>6.Circle Four Curve Arrow</button><button>7.Sphere Four Curve Arrow</button><button>8.Quad Spirald Arrow</button>
            <button>9.Quad Arrow</button><button>10.Quad Curve&nbsp; Arrow</button><button>11. Curve Single Arrow</button><button>12. Curve double Arrow</button>
            <button>13.Square</button><button>14. Circle</button><button>15. Cross</button><button>16. Gear curve</button>
            <button>17. Triangle</button><button>18. Sphere</button><button>19. Half Sphere</button><button>20. Box</button>
            <button>21. Pyramid</button><button>22. Diamond</button><button>23. Circle Pin</button><button>24. Square Pin</button>
            <button>25. Sphere Pin</button><button>26. Circle Dumbbell</button><button>27. Square Dumbbell</button><button>28. Sphere Dumbbell</button>
            <button>29. Plus</button><button>30. Plus Thin</button><button>31. Locator</button>
        </div>
        <h3 class="overrides">*****Drawing Overrides*****</h3>
        <div class="field color"><label for="color">Color</label><button class="swatch" aria-label="Pick color"></button><input id="color" type="range" min="0" max="100" value="100"></div>
        <div class="field"><label for="thick">Thickness</label><input id="thick" type="text" value="1.0"><input type="range" min="0" max="100" value="18" aria-label="Thickness slider"></div>
        <div class="field"><label for="transp">Transparency</label><input id="transp" type="text" value="0.0"><input type="range" min="0" max="100" value="0" aria-label="Transparency slider"></div>
        <div class="mode"><label for="mode">Display Mode</label><div class="select"><select id="mode"><option>Normal</option></select></div></div>
        <button class="small">Apply</button>
        <button class="small">Reset</button>
    </div>
</div>

<script src="script.js"></script>
</body>
</html>
```
FILE: styles.css
```css
* {
    box-sizing: border-box;
}
body {
    margin: 0;
    height: 100vh;
    display: flex;
    flex-direction: column;
    overflow: hidden;
    position: relative;
    background-color: #444244;
    color: #c8c6c8;
    font-family: "Open Sans", "Noto Sans", sans-serif;
    font-size: 11px;
    line-height: 16px;
}
button, input, select {
    font: inherit;
    color: inherit;
    border: none;
    padding: 0;
    margin: 0;
    background: none;
    border-radius: 0;
    min-width: 0;
}
a {
    color: inherit;
    text-decoration: none;
}
svg {
    display: block;
    flex: none;
}

/* Icon paint */
.g { fill: #c6c4c6; }
.w { fill: #cfcdcf; }
.t { fill: #4bb2b8; }
.o { fill: #dd9450; }
.d { fill: #3a383a; }
.st { stroke: #333133; }
.ln { fill: none; stroke: #c6c4c6; }
.ln2 { fill: none; stroke: #c6c4c6; stroke-width: 2; }
.lt { fill: none; stroke: #4bb2b8; stroke-width: 2; }
.lt2 { fill: none; stroke: #4bb2b8; stroke-width: 2; }
.lo { fill: none; stroke: #dd9450; stroke-width: 2; }
.ld { fill: none; stroke: #333133; }
.ld3 { fill: none; stroke: #2c4250; stroke-width: 4; }
.hb { fill: #444244; stroke: #c6c4c6; }
.dash { stroke: #2c4250; stroke-width: 2; stroke-dasharray: 3 1; }
.dashg { fill: none; stroke: #c6c4c6; stroke-width: 2; stroke-dasharray: 3 2; }
.tdash { fill: none; stroke: #4db5b0; stroke-width: 2; stroke-dasharray: 5 3; }
.tdash2 { fill: none; stroke: #4db5b0; stroke-dasharray: 3 1; }
.gear { fill: #444244; stroke: #4bb2b8; stroke-width: 2; }
.tiny { font-size: 8px; font-weight: bold; fill: #333; }
.type-t { font: bold 32px "Liberation Serif", serif; fill: #dd9450; }
.svg-t { font: bold 12px "Liberation Sans", sans-serif; fill: #3a383a; }
.zeros { font-size: 11px; fill: #4bb2b8; }
.a-t { font-size: 11px; font-weight: bold; fill: #fff; }
.on-t { font-size: 7px; font-weight: bold; fill: #244; }
.maya-m { font-size: 18px; font-weight: bold; fill: #fff; }
.maya-s { font-size: 7px; font-weight: bold; fill: #fff; }
.logo-m { font-size: 10px; font-weight: bold; fill: #fff; }
.help-q { font-size: 14px; font-weight: bold; fill: #333; }

/* Shared controls */
.menu {
    display: flex;
    gap: 16px;
}
.on {
    background-color: #5285a6;
}
.select {
    position: relative;
    display: flex;
    align-items: center;
    background-color: #5d5b5d;
}
.select select {
    appearance: none;
    flex: 1;
    height: 100%;
    padding: 0 24px 0 3px;
}
.select::after {
    content: "";
    position: absolute;
    right: 5px;
    top: 50%;
    margin-top: -3px;
    border: 5px solid transparent;
    border-top: 6px solid #d0ced0;
    border-bottom: none;
    pointer-events: none;
}
.tool {
    width: 23px;
    height: 22px;
    display: flex;
    align-items: center;
    justify-content: center;
    flex: none;
}
.sep, .chev {
    width: 23px;
    height: 20px;
    flex: none;
    background: linear-gradient(#8a888a, #8a888a) center / 3px 12px no-repeat,
        linear-gradient(#8a888a, #8a888a) center / 1px 20px no-repeat;
}
.chev {
    width: 21px;
    background: none;
    display: flex;
    align-items: center;
    justify-content: center;
}
.chev::before {
    content: "";
    width: 4px;
    height: 18px;
    background-color: #8a888a;
    clip-path: polygon(0 0, 100% 50%, 0 100%);
}
.drop {
    margin: 0 2px;
    border: 4px solid transparent;
    border-top: 5px solid #9a989a;
    border-bottom: none;
}
.drop.wide {
    margin: 0 6px 0 4px;
}
.boxed {
    width: 100px;
    height: 21px;
    padding: 0 5px;
    text-align: left;
    color: #d8d6d8;
    border: 1px solid #383638;
    border-radius: 2px;
    white-space: nowrap;
}
.up, .down, .left, .right {
    width: 0;
    height: 0;
    flex: none;
    border: 5px solid transparent;
}
.up { border-bottom-color: #b5b3b5; border-top: none; }
.down { border-top-color: #b5b3b5; border-bottom: none; }
.left { border-right-color: #b5b3b5; border-left: none; }
.right { border-left-color: #b5b3b5; border-right: none; }

/* Menu bar */
.menubar {
    height: 20px;
    display: flex;
    justify-content: space-between;
    padding-left: 1px;
    color: #dcdadc;
}
.menubar > .menu {
    gap: 15px;
    padding-top: 1px;
}
.workspace {
    display: flex;
    gap: 4px;
    height: 17px;
    color: #b8b6b8;
}
.workspace label {
    padding-top: 1px;
}
.workspace .select {
    width: 192px;
    margin-right: 3px;
}
.workspace .lock {
    margin-right: 6px;
}

/* Status line */
.status-line {
    height: 30px;
    display: flex;
    align-items: center;
    padding: 1px 3px 0 7px;
    border-bottom: 2px solid #373537;
}
.menuset {
    width: 98px;
    height: 20px;
    border-radius: 2px;
}
.symmetry {
    margin-right: 1px;
}
.account {
    width: 120px;
    height: 22px;
    padding-left: 4px;
    color: #eeecee;
}
.sidebar-toggles {
    display: flex;
    margin-left: auto;
}

/* Shelf */
.shelf {
    height: 70px;
    display: flex;
    padding: 4px 3px 0 7px;
    border-bottom: 2px solid #383638;
}
.shelf-side {
    width: 20px;
    height: 62px;
    margin-right: 2px;
    padding: 10px 4px;
    display: flex;
    flex-direction: column;
    justify-content: space-between;
    background-color: #353335;
}
.shelf-main {
    flex: 1;
}
.shelf-tabs {
    height: 18px;
    display: flex;
    gap: 2px;
    padding: 2px 0 0 2px;
    background-color: #373537;
}
.shelf-tabs button {
    padding: 0 11px 0 10px;
    color: #9c9a9c;
    background-color: #3a383a;
    border: 1px solid #2f2d2f;
    border-bottom: none;
    border-radius: 3px 3px 0 0;
    white-space: nowrap;
}
.shelf-tabs .active {
    padding: 0 10px 0 9px;
    background-color: #444244;
    border-color: #444244;
    color: #f0eef0;
}
.shelf-icons {
    display: flex;
    align-items: center;
    height: 42px;
    padding-left: 5px;
}
.shelf-icons button {
    width: 35px;
    flex: none;
    display: flex;
    justify-content: center;
}
.shelf-icons svg {
    width: 26px;
    height: 26px;
    overflow: visible;
}
.shelf-icons .framed {
    width: 34px;
    height: 34px;
    padding: 4px;
    background: linear-gradient(#3ee03e, #3ee03e) top left / 6px 1px,
        linear-gradient(#3ee03e, #3ee03e) bottom left / 6px 1px,
        linear-gradient(#3ee03e, #3ee03e) top right / 6px 1px,
        linear-gradient(#3ee03e, #3ee03e) bottom right / 6px 1px;
    background-repeat: no-repeat;
    border-left: 1px solid #3ee03e;
    border-right: 1px solid #3ee03e;
}
.bar {
    width: 34px;
    height: 34px;
    flex: none;
    background: linear-gradient(#9a989a, #9a989a) center / 2px 100% no-repeat;
}
.shelf-scroll {
    width: 12px;
    height: 34px;
    margin: 0 4px 0 auto;
    padding: 3px 1px;
    display: flex;
    flex-direction: column;
    justify-content: space-between;
    background-color: #383638;
}
.ball {
    height: 10px;
    border-radius: 5px;
    background-color: #5d5b5d;
}

/* Main area */
.workarea {
    flex: 1;
    display: flex;
    min-height: 0;
    background-color: #383638;
}
.toolbox {
    width: 39px;
    display: flex;
    flex-direction: column;
    padding-top: 4px;
    background-color: #444244;
    border-right: 2px solid #383638;
}
.toolbox button {
    width: 33px;
    height: 37px;
    flex: none;
    display: flex;
    align-items: center;
    padding-left: 1px;
}
.toolbox button svg {
    width: 28px;
    height: 28px;
}
.grip {
    width: 33px;
    height: 4px;
    margin-bottom: 4px;
    flex: none;
    background: radial-gradient(#8a888a 1px, transparent 1px) 0 0 / 4px 4px;
}
.toolbox hr {
    width: 33px;
    height: 2px;
    margin: 5px 0;
    border: none;
    background-color: #a8a6a8;
}
.toolbox .far {
    margin-top: 78px;
}
.maya {
    margin-top: auto;
    margin-bottom: 5px;
}

/* Outliner */
.outliner {
    width: 264px;
    margin: 3px 3px 4px 2px;
    display: flex;
    flex-direction: column;
    background-color: #444244;
}
.panel-tab {
    height: 16px;
    background-color: #383638;
}
.panel-tab span {
    display: block;
    width: 63px;
    padding-left: 10px;
    line-height: 18px;
    background-color: #444244;
    border-radius: 3px 3px 0 0;
}
.outliner > .menu {
    height: 27px;
    padding: 3px 9px 0;
    gap: 15px;
}
.search {
    display: flex;
    align-items: center;
    gap: 7px;
    padding: 0 7px 0 6px;
}
.search-box {
    flex: 1;
    height: 19px;
    display: flex;
    align-items: center;
    padding: 0 4px 0 3px;
    background-color: #2b292b;
}
.search-box input {
    flex: 1;
}
.search-box input::placeholder {
    color: #9a989a;
}
.tree-wrap {
    flex: 1;
    display: flex;
    min-height: 0;
    margin: 1px 4px 0 2px;
    background-color: #373537;
}
.tree {
    flex: 1;
    margin: 0;
    padding: 0;
    list-style: none;
}
.tree li {
    height: 20px;
    display: flex;
    align-items: center;
    gap: 3px;
    padding-left: 35px;
}
.tree svg {
    width: 16px;
    height: 16px;
}
.tree .dim {
    color: #6f6d6f;
}
.tree .selected {
    background-color: #5285a6;
    color: #fff;
}
.vscroll {
    width: 14px;
    display: flex;
    flex-direction: column;
    align-items: center;
    gap: 5px;
    padding: 4px 0 6px;
}
.vscroll b {
    flex: 1;
    width: 10px;
    border-radius: 4px;
    background-color: #5d5b5d;
}
.hscroll {
    height: 12px;
    display: flex;
    align-items: center;
    gap: 5px;
    margin: 0 4px 0 2px;
    padding: 0 17px 0 3px;
    background-color: #373537;
}
.hscroll b {
    flex: 1;
    height: 10px;
    border-radius: 4px;
    background-color: #5d5b5d;
}
.dots {
    width: 86px;
    height: 5px;
    margin: 0 auto;
    background: radial-gradient(#8a888a 1px, transparent 1px) 0 0 / 4px 4px repeat-x;
}

/* Viewport */
.viewport {
    flex: 1;
    display: flex;
    flex-direction: column;
    min-width: 0;
    margin: 4px 4px 3px 0;
    border: 1px solid #8a888a;
    background-color: #444244;
}
.viewport > .menu {
    padding: 1px 8px 0;
    height: 18px;
}
.panel-bar {
    height: 21px;
    display: flex;
    align-items: center;
}
.panel-bar button {
    width: 19px;
    height: 18px;
    flex: none;
    display: flex;
    align-items: center;
    justify-content: center;
}
.panel-bar svg {
    width: 16px;
    height: 16px;
}
.panel-bar .sep {
    width: 11px;
    height: 16px;
    background-size: 2px 10px, 1px 16px;
}
.panel-bar .sep:first-child {
    width: 10px;
}
.panel-bar .sunk {
    background-color: #3d3b3d;
    border: 1px solid #353335;
}
.panel-bar .gap {
    margin-left: 2px;
}
.num {
    width: 39px;
    height: 14px;
    padding: 0 4px;
    margin-right: 2px;
    background-color: #2b292b;
    border-radius: 2px;
}
.view-transform {
    width: 199px;
    height: 17px;
    margin-left: 3px;
}
.view-transform select {
    color: #d8d6d8;
}
.canvas {
    flex: 1;
    position: relative;
    min-height: 0;
    background-color: #5d5b5d;
}
.scene {
    width: 100%;
    height: 100%;
}
.grid {
    stroke: #454345;
}
.grid .axis-line {
    stroke: #3e3c3e;
    stroke-width: 2;
}
.curve-navy {
    fill: none;
    stroke: #15156a;
}
.curve-green {
    fill: none;
    stroke: #5cf0a4;
}
.cube {
    font: bold 9px "DejaVu Sans", sans-serif;
    fill: #5a585a;
}
.axis {
    font: bold 7px "Liberation Sans", sans-serif;
}
.cam {
    font: bold 11px "Liberation Sans", sans-serif;
    fill: #fff;
}
.hud {
    position: absolute;
    left: 15px;
    top: -3px;
    border-collapse: collapse;
    font: bold 11px/20px "Liberation Sans", sans-serif;
    color: #fff;
}
.hud th {
    width: 50px;
    padding: 0;
    text-align: left;
}
.hud td {
    width: 65px;
    padding: 0;
    text-align: right;
}

/* Channel box */
.channels {
    width: 263px;
    display: flex;
    flex-direction: column;
    margin: 2px 0 4px;
    padding: 0 7px 0 8px;
    background-color: #444244;
}
.channel-icons {
    height: 21px;
    display: flex;
    justify-content: flex-end;
    align-items: center;
    gap: 7px;
}
.channel-icons svg {
    width: 14px;
    height: 14px;
}
.channels > .menu {
    padding: 3px 5px;
}
.channels h2 {
    margin: 5px 0 0 2px;
    font-size: 10px;
    line-height: 15px;
}
.attrs {
    display: grid;
    grid-template-columns: 1fr 74px;
    column-gap: 6px;
    text-align: right;
}
.attrs input {
    height: 15px;
    padding: 0 9px;
    background-color: #2b292b;
    border-radius: 2px;
    color: #d8d6d8;
}
.attrs .soft {
    background-color: #3a383a;
}
.strip {
    height: 14px;
    margin-top: 17px;
    background-color: #3a383a;
}
.strip.dark {
    margin-top: 16px;
}
.attr-list {
    height: 199px;
    margin-top: 17px;
    background-color: #2b292b;
}
.layer-head {
    height: 49px;
    display: flex;
    justify-content: flex-end;
    gap: 9px;
    padding: 26px 4px 0;
}
.layer-head svg {
    width: 16px;
    height: 16px;
}
.layer-list {
    flex: 1;
    background-color: #2b292b;
}
.hscroll.short {
    margin: 0 0 4px;
    padding: 0 3px 0 5px;
}
.hscroll.short b {
    flex: none;
    width: 154px;
}
.hscroll.short .right {
    margin-left: auto;
}
.side-tabs {
    width: 16px;
    display: flex;
    flex-direction: column;
    background-color: #3a383a;
    padding-top: 2px;
}
.side-tabs a {
    writing-mode: vertical-rl;
    padding: 10px 0 12px;
    line-height: 16px;
    background-color: #444244;
    border-bottom: 2px solid #333133;
    white-space: nowrap;
}
.side-tabs .back {
    background-color: #3a383a;
}

/* Time slider */
.time-row {
    height: 52px;
    display: flex;
    align-items: center;
    padding: 0 3px 0 9px;
    border-top: 1px solid #373537;
    border-bottom: 2px solid #383638;
}
.timeline {
    flex: 1;
    height: 48px;
    position: relative;
    overflow: hidden;
    background: linear-gradient(#5d5b5d, #5d5b5d) 8px 40px / 100% 2px no-repeat,
        linear-gradient(#2b292b, #2b292b) 0 8px / 100% 32px no-repeat;
}
.ticks {
    height: 100%;
    display: grid;
    grid-template-columns: 61fr repeat(23, minmax(0, 66fr)) minmax(0, 22fr);
}
.ticks span {
    padding: 7px 0 0 8px;
    color: #a8a6a8;
    background: linear-gradient(#222022, #222022) 0 0 / 1px 8px no-repeat,
        linear-gradient(#9a989a, #9a989a) 0 24px / 1px 16px no-repeat,
        linear-gradient(#222022, #222022) 0 40px / 1px 8px no-repeat;
}
.current {
    position: absolute;
    left: 8px;
    top: 0;
    width: 13px;
    height: 48px;
    padding: 23px 0 0 7px;
    background-color: rgba(130, 128, 130, 0.4);
    color: #fff;
}
.frame {
    width: 50px;
    height: 20px;
    padding: 0 5px;
    flex: none;
    background-color: #2b292b;
    border-radius: 2px;
}
.time-row .frame {
    margin-left: 10px;
}
.playback {
    display: flex;
    margin-left: 5px;
}
.playback button {
    width: 28px;
    display: flex;
    justify-content: center;
}
.playback svg {
    width: 18px;
    height: 18px;
}

/* Range slider */
.range-row {
    height: 36px;
    display: flex;
    align-items: center;
    padding: 1px 6px 0 9px;
    border-bottom: 2px solid #383638;
}
.range {
    flex: 1;
    height: 20px;
    margin: 0 9px 0 11px;
    padding: 2px 1px;
    background-color: #2b292b;
}
.range-bar {
    width: 61%;
    height: 16px;
    display: flex;
    align-items: center;
    gap: 8px;
    background-color: #444244;
    color: #fff;
}
.range-bar i {
    width: 8px;
    height: 16px;
    background-color: #9a989a;
}
.range-bar em {
    width: 5px;
    height: 11px;
    margin: 0 auto;
    background: radial-gradient(#8a888a 1px, transparent 1px) 0 0 / 3px 3px;
}
.range-bar .dimmer {
    color: #b8b6b8;
}
.range-row .sep {
    width: 43px;
}
.range-row .boxed {
    padding: 0 4px;
}
.outline-drop {
    width: 9px;
    height: 6px;
    margin: 0 8px 0 4px;
    background-color: #a8a6a8;
    clip-path: polygon(0 0, 100% 0, 50% 100%, 12% 12%, 50% 80%, 88% 12%);
}
.boxed + .outline-drop {
    margin-left: 15px;
}
.fps {
    width: 95px;
    height: 19px;
    margin-right: 13px;
}
.range-row .tool {
    width: 22px;
}
.range-row .tool + .tool.on {
    margin-left: 8px;
}
.prefs {
    display: flex;
    gap: 7px;
}

/* Help line */
.help-line {
    height: 21px;
    display: flex;
    align-items: flex-start;
    padding: 9px 8px 0;
}
.help-text {
    width: 944px;
    padding: 3px 0 0 7px;
    border-right: 1px solid #333133;
    color: #e0dee0;
}
.help-line label {
    width: 48px;
    padding: 3px 0 0 18px;
    background: radial-gradient(#8a888a 1px, transparent 1px) 4px 0 / 3px 3px repeat-y;
}
.help-line input {
    flex: 333 1 0;
    height: 18px;
    background-color: #2b292b;
}
.help-line .result {
    flex-grow: 520;
    margin: 0 11px 0 4px;
}

/* Floating window */
.window {
    position: absolute;
    top: 340px;
    right: 109px;
    width: 605px;
    overflow: hidden;
    background-color: #444244;
    border: 1px solid #5a585a;
    border-top: none;
    border-radius: 8px;
    box-shadow: 0 6px 24px rgba(0, 0, 0, 0.35);
}
.titlebar {
    height: 30px;
    display: flex;
    align-items: center;
    padding-left: 7px;
    background-color: #f4f2f4;
    color: #8a888a;
}
.titlebar span {
    flex: 1;
    padding-left: 6px;
    font-size: 12px;
}
.titlebar button {
    width: 46px;
    height: 30px;
    display: flex;
    align-items: center;
    justify-content: center;
}
.titlebar button svg {
    width: 12px;
    height: 12px;
    fill: none;
    stroke: #8a888a;
}
.window-body {
    padding: 2px 2px 3px 1px;
}
.window-body > button {
    display: block;
}
.clear {
    width: 100px;
    height: 50px;
    padding-top: 2px;
    background-color: #8468b0;
    color: #000;
}
.window-body h3 {
    width: fit-content;
    height: 13px;
    margin: 20px 0 10px;
    font-size: 10px;
    line-height: 14px;
    background-color: #f0f;
    color: #111;
}
.shapes {
    display: grid;
    grid-template-columns: repeat(4, 1fr);
}
.shapes button {
    height: 30px;
    padding-top: 2px;
    background-color: #5d5b5d;
    border-right: 1px solid #636163;
    border-bottom: 1px solid #616061;
    color: #eeecee;
    white-space: nowrap;
}
.window-body .overrides {
    margin: 1px 0 0 1px;
}
.field {
    height: 22px;
    display: flex;
    align-items: center;
}
.field.color {
    height: 17px;
}
.field label {
    width: 144px;
    padding-right: 2px;
    text-align: right;
}
.field input[type="text"] {
    width: 80px;
    height: 18px;
    padding: 0 5px;
    background-color: #2b292b;
    border-radius: 2px;
}
.swatch {
    width: 80px;
    height: 13px;
    background-color: #d0ced0;
}
.field input[type="range"] {
    appearance: none;
    width: 160px;
    height: 13px;
    margin-left: 3px;
    background: linear-gradient(#2b292b, #2b292b) center / 100% 4px no-repeat;
}
.field input[type="range"]::-webkit-slider-thumb {
    appearance: none;
    width: 7px;
    height: 13px;
    border-radius: 2px;
    background-color: #c0bec0;
}
.mode {
    display: flex;
    align-items: center;
    gap: 7px;
    padding-left: 1px;
    height: 21px;
}
.mode .select {
    width: 166px;
    height: 18px;
}
.small {
    height: 23px;
    margin-left: 1px;
    padding: 0 5px 1px;
    background-color: #5d5b5d;
    color: #eeecee;
}
```
FILE: script.js
```js
// Perspective grid on the ground plane: 24 x 24 cells between four corners
const corners = {
    tl: [509, 198],
    tr: [1129, 208],
    bl: [470, 832],
    br: [1128, 843]
};
const CELLS = 24;
const grid = document.getElementById("grid");

function mix(a, b, t) {
    return [a[0] + (b[0] - a[0]) * t, a[1] + (b[1] - a[1]) * t];
}

function addLine(p, q, isAxis) {
    const line = document.createElementNS("http://www.w3.org/2000/svg", "line");
    line.setAttribute("x1", p[0]);
    line.setAttribute("y1", p[1]);
    line.setAttribute("x2", q[0]);
    line.setAttribute("y2", q[1]);
    if (isAxis) line.setAttribute("class", "axis-line");
    grid.appendChild(line);
}

for (let i = 0; i <= CELLS; i++) {
    const u = i / CELLS;
    const v = (u * 0.945) / (1 - u * 0.055); // rows get closer towards the top
    addLine(mix(corners.tl, corners.tr, u), mix(corners.bl, corners.br, u), i === CELLS / 2);
    addLine(mix(corners.tl, corners.bl, v), mix(corners.tr, corners.br, v), i === CELLS / 2);
}

// Frame numbers on the time slider
const ticks = document.getElementById("ticks");
ticks.appendChild(document.createElement("div"));
for (let frame = 5; frame <= 120; frame += 5) {
    const tick = document.createElement("span");
    tick.textContent = frame;
    ticks.appendChild(tick);
}
```
